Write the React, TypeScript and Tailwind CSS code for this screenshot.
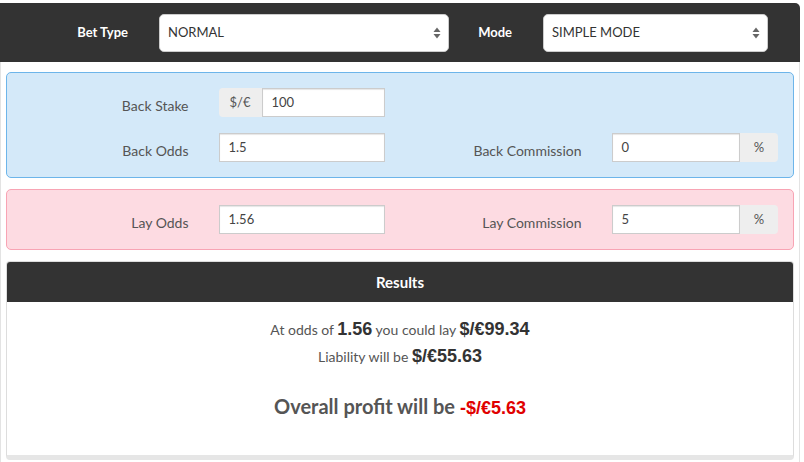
import React from 'react';

const font = { fontFamily: 'Lato, "Open Sans", sans-serif' };
const numFont = 'font-["Liberation_Sans",Arial,sans-serif] font-bold';

function Arrows() {
  return (
    <svg width="8" height="12" viewBox="0 0 8 12" className="shrink-0">
      <path d="M4 0.5 L7.5 5 L0.5 5 Z" fill="#666" />
      <path d="M4 11.5 L7.5 7 L0.5 7 Z" fill="#666" />
    </svg>
  );
}

function Select({ value, width }: { value: string; width: string }) {
  return (
    <div
      className={`${width} h-[38px] bg-white rounded-[5px] border border-[#ccc] flex items-center justify-between pl-[8px] pr-[7px] text-[13px] text-[#333]`}
    >
      <span>{value}</span>
      <Arrows />
    </div>
  );
}

function Label({ children }: { children: React.ReactNode }) {
  return (
    <div className="px-[15px] text-right text-[14px] text-[#555] pt-[8px] leading-[20px]">{children}</div>
  );
}

function Input({ value }: { value: string }) {
  return (
    <div className="flex-1 h-[29px] bg-white border border-[#ccc] shadow-[inset_0_1px_1px_rgba(0,0,0,0.1)] flex items-center px-[9px] text-[13px] text-[#444]">
      {value}
    </div>
  );
}

function Addon({ children, side }: { children: React.ReactNode; side: 'left' | 'right' }) {
  return (
    <div
      className={`h-[29px] bg-[#eee] flex items-center justify-center text-[13px] text-[#555] ${
        side === 'left' ? 'w-[43px] rounded-l-[4px]' : 'w-[38px] rounded-r-[4px]'
      }`}
    >
      {children}
    </div>
  );
}

function Field({ children }: { children: React.ReactNode }) {
  return <div className="px-[15px] flex">{children}</div>;
}

export default function App() {
  return (
    <div className="w-[800px] min-h-[462px] bg-white pt-[3px] flex flex-col" style={font}>
      {/* Bet type / mode bar */}
      <div className="h-[59px] bg-[#333] rounded-tr-[5px] flex items-center">
        <div className="w-[159px] pr-[31px] text-right text-white font-bold text-[13px]">Bet Type</div>
        <Select value="NORMAL" width="w-[290px]" />
        <div className="w-[94px] pr-[31px] text-right text-white font-bold text-[13px]">Mode</div>
        <Select value="SIMPLE MODE" width="w-[225px]" />
      </div>

      <div className="flex-1 border-x border-[#e3e3e3] px-[5px] pt-[10px] flex flex-col">
        {/* Back */}
        <div className="bg-[#d4e9f9] border border-[#6db5ea] rounded-[5px] py-[15px] grid grid-cols-4 gap-y-[16px]">
          <Label>Back Stake</Label>
          <Field>
            <Addon side="left">$/€</Addon>
            <Input value="100" />
          </Field>
          <div />
          <div />
          <Label>Back Odds</Label>
          <Field>
            <Input value="1.5" />
          </Field>
          <Label>Back Commission</Label>
          <Field>
            <Input value="0" />
            <Addon side="right">%</Addon>
          </Field>
        </div>

        {/* Lay */}
        <div className="mt-[11px] bg-[#fddbe2] border border-[#f8a4b4] rounded-[5px] py-[15px] grid grid-cols-4">
          <Label>Lay Odds</Label>
          <Field>
            <Input value="1.56" />
          </Field>
          <Label>Lay Commission</Label>
          <Field>
            <Input value="5" />
            <Addon side="right">%</Addon>
          </Field>
        </div>

        {/* Results */}
        <div className="mt-[11px] rounded-[4px] border border-[#ddd] border-b-[5px] border-b-[#e6e6e6] overflow-hidden">
          <div className="h-[40px] bg-[#333] flex items-center justify-center text-white font-bold text-[15px]">
            Results
          </div>
          <div className="h-[153px] bg-white text-center text-[#555] pt-[14px]">
            <div className="text-[14px] leading-[26px]">
              At odds of <span className={`${numFont} text-[18px] text-[#333]`}>1.56</span> you could lay{' '}
              <span className={`${numFont} text-[18px] text-[#333]`}>$/€99.34</span>
            </div>
            <div className="text-[14px] leading-[26px]">
              Liability will be <span className={`${numFont} text-[18px] text-[#333]`}>$/€55.63</span>
            </div>
            <div className="mt-[22px] text-[20px] font-bold leading-[28px]">
              Overall profit will be <span className={`${numFont} text-[18px] text-[#e00000]`}>-$/€5.63</span>
            </div>
          </div>
        </div>
        <div className="h-[3px]" />
      </div>
    </div>
  );
}
